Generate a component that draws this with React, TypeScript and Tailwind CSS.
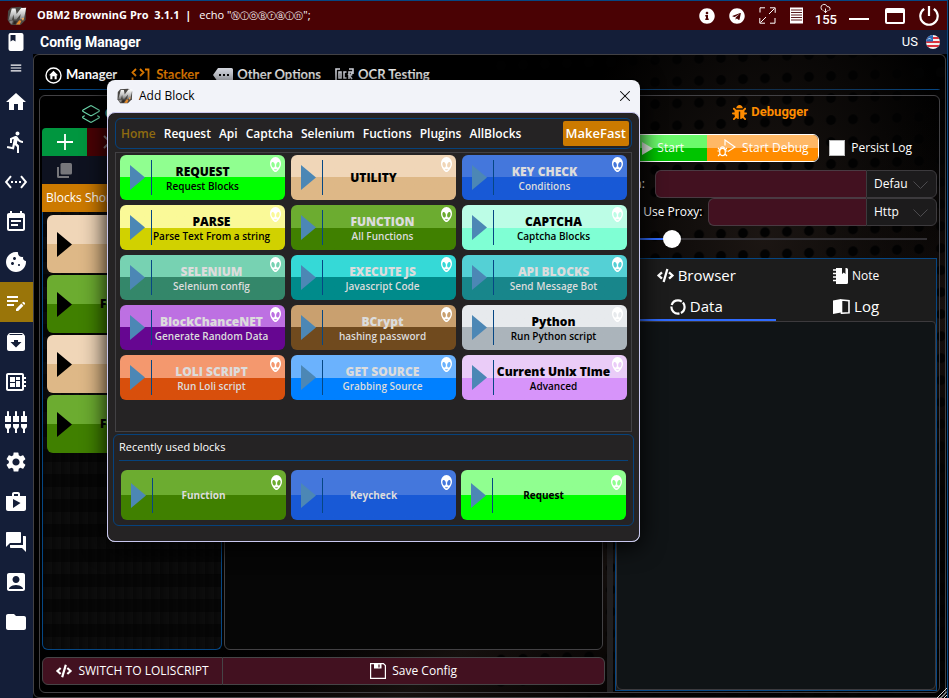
import { useState, type ReactNode } from "react"
import clsx from "clsx"
import {
  MdHome,
  MdMenu,
  MdDirectionsRun,
  MdSettingsEthernet,
  MdEventNote,
  MdCookie,
  MdEditNote,
  MdArchive,
  MdDeveloperBoard,
  MdSettingsInputComponent,
  MdSettings,
  MdShop,
  MdForum,
  MdAccountBox,
  MdFolder,
} from "react-icons/md"
import { FaInfoCircle, FaTelegram, FaBug, FaCode } from "react-icons/fa"
import { CloudDownload, Layers2, X } from "lucide-react"

type Block = {
  title: string
  sub?: string
  color: string
  light?: boolean
  narrow?: boolean
  left?: boolean
}

const BLOCKS: Block[] = [
  { title: "REQUEST", sub: "Request Blocks", color: "from-[#90ff90] to-[#00ff00]", narrow: true },
  { title: "UTILITY", color: "from-[#f0d6b8] to-[#deb887]", narrow: true },
  { title: "KEY CHECK", sub: "Conditions", color: "from-[#4477dc] to-[#1859d6]", light: true, narrow: true, left: true },
  { title: "PARSE", sub: "Parse Text From a string", color: "from-[#faf998] to-[#d1d100]" },
  { title: "FUNCTION", sub: "All Functions", color: "from-[#6cac30] to-[#408000]", light: true },
  { title: "CAPTCHA", sub: "Captcha Blocks", color: "from-[#bcfde6] to-[#7fffd4]" },
  { title: "SELENIUM", sub: "Selenium config", color: "from-[#77d2b2] to-[#34876a]", light: true },
  { title: "EXECUTE JS", sub: "Javascript Code", color: "from-[#35d9d7] to-[#008b8b]", light: true },
  { title: "API BLOCKS", sub: "Send Message Bot", color: "from-[#54d0d5] to-[#18868b]", light: true },
  { title: "BlockChanceNET", sub: "Generate Random Data", color: "from-[#bd70e2] to-[#660691]", light: true },
  { title: "BCrypt", sub: "hashing password", color: "from-[#c9a06f] to-[#704a1e]", light: true },
  { title: "Python", sub: "Run Python script", color: "from-[#e7eaed] to-[#abb4bb]" },
  { title: "LOLI SCRIPT", sub: "Run Loli script", color: "from-[#f4986e] to-[#d84f0c]", light: true, left: true },
  { title: "GET SOURCE", sub: "Grabbing Source", color: "from-[#6bb2fd] to-[#0080ff]", light: true },
  { title: "Current Unix Time", sub: "Advanced", color: "from-[#eaccf8] to-[#d794fa]" },
]

const RECENT: Block[] = [
  { title: "Function", color: "from-[#6cac30] to-[#408000]", light: true },
  { title: "Keycheck", color: "from-[#4477dc] to-[#1859d6]", light: true },
  { title: "Request", color: "from-[#90ff90] to-[#00ff00]" },
]

const STACK = [
  { title: "UTILITY", color: "from-[#f0d6b8] to-[#deb887]" },
  { title: "FUNCTION", color: "from-[#6cac30] to-[#408000]" },
  { title: "UTILITY", color: "from-[#f0d6b8] to-[#deb887]" },
  { title: "FUNCTION", color: "from-[#6cac30] to-[#408000]" },
]

const CATEGORIES = ["Home", "Request", "Api", "Captcha", "Selenium", "Fuctions", "Plugins", "AllBlocks"]

const NAV = [
  { label: "Home", icon: MdHome },
  { label: "Runner", icon: MdDirectionsRun },
  { label: "Proxies", icon: MdSettingsEthernet },
  { label: "Wordlists", icon: MdEventNote },
  { label: "Cookies", icon: MdCookie },
  { label: "Configs", icon: MdEditNote },
  { label: "Hits", icon: MdArchive },
  { label: "Tools", icon: MdDeveloperBoard },
  { label: "Plugins", icon: MdSettingsInputComponent },
  { label: "Settings", icon: MdSettings },
  { label: "Shop", icon: MdShop },
  { label: "Chat", icon: MdForum },
  { label: "Account", icon: MdAccountBox },
  { label: "Files", icon: MdFolder },
]

function Logo({ className }: { className?: string }) {
  return (
    <svg viewBox="0 0 20 20" className={className} aria-hidden="true">
      <defs>
        <linearGradient id="steel" x1="0" y1="0" x2="0" y2="1">
          <stop offset="0" stopColor="#ffffff" />
          <stop offset="0.6" stopColor="#b9b9b9" />
          <stop offset="1" stopColor="#6e6e6e" />
        </linearGradient>
      </defs>
      <path d="M4 1.5 14 .8 19 4.5 18.6 14 13.6 19H4L.6 14 1 5Z" fill="#4a4744" />
      <path d="M1.5 14.5 4.8 2.6 8.6 2.4 9.6 8 14.2 2 19.2 1.8 16.8 13.4 12.6 13.6 13.8 8 9.4 13.4 7.2 13.4 6.4 8.4 4.8 14.4Z" fill="url(#steel)" />
      <path d="M2.5 15 6 14.6 5 18 2.8 17Z" fill="#8c8a88" />
      <path d="M9 18.4 12.2 14.2 14.4 14.8 12.8 18.6Z" fill="#e58a2c" />
      <path d="M14.4 12.2 17.2 11.8 16 15Z" fill="#f2a95a" />
      <path d="M7 15.2h3l-1.6 3H6.2Z" fill="#2a2522" />
    </svg>
  )
}

function Alien({ className }: { className?: string }) {
  return (
    <svg viewBox="3 3 18 18" preserveAspectRatio="none" className={className} fill="currentColor" aria-hidden="true">
      <path d="M12 3C16.97 3 21 6.58 21 11C21 15.42 15 21 12 21C9 21 3 15.42 3 11C3 6.58 7.03 3 12 3M10.31 10.93C9.29 9.29 7.47 8.58 6.25 9.34C5.03 10.1 4.87 12.05 5.89 13.69C6.92 15.33 8.74 16.04 9.96 15.28C11.18 14.5 11.33 12.57 10.31 10.93M13.69 10.93C12.67 12.57 12.82 14.5 14.04 15.28C15.26 16.04 17.08 15.33 18.11 13.69C19.13 12.05 18.97 10.1 17.75 9.34C16.53 8.58 14.71 9.29 13.69 10.93M12 17.75C10 17.75 9.5 17 9.5 17C9.5 17.03 10 19 12 19C14 19 14.5 17.03 14.5 17C14.5 17 14 17.75 12 17.75Z" />
    </svg>
  )
}

function Arrow({ className }: { className?: string }) {
  return (
    <svg viewBox="0 0 15 25" className={clsx("h-[25px] w-[15px] shrink-0", className)} fill="currentColor" aria-hidden="true">
      <path d="M0 0 15 12.5 0 25Z" />
    </svg>
  )
}

function BlockButton({ block, recent }: { block: Block; recent?: boolean }) {
  return (
    <button
      className={clsx(
        "relative flex min-w-0 items-center rounded-md bg-linear-to-b from-50% to-50% pl-2.5",
        recent ? "h-[50px]" : "h-[45px]",
        block.color,
        block.light ? "text-[#dcdcdc]" : "text-black"
      )}
    >
      <Arrow className="text-[#4c87b5]" />
      <span className="ml-1.5 h-[35px] w-px shrink-0 bg-[#064784]" />
      <span
        className={clsx(
          "flex min-w-0 flex-1 flex-col items-center whitespace-nowrap",
          recent || block.narrow ? "pr-8" : "pr-3.5"
        )}
      >
        <span className={clsx("flex flex-col", !block.left && "items-center")}>
          <span className={recent ? "text-[10px] leading-4 font-bold" : "text-[12px] leading-4 font-extrabold"}>
            {block.title}
          </span>
          {block.sub && <span className="text-[10px] leading-3 font-semibold">{block.sub}</span>}
        </span>
      </span>
      <Alien className={clsx("absolute right-1 h-[15px] w-[11px] text-white", recent ? "top-[5px]" : "top-0.5")} />
    </button>
  )
}

function AddBlockDialog() {
  const [category, setCategory] = useState("Home")

  return (
    <div
      role="dialog"
      aria-label="Add Block"
      className="absolute top-20 left-[107px] flex h-[462px] w-[533px] flex-col rounded-lg bg-[#f2f3f9] shadow-[0_4px_24px_#000]"
    >
      <div className="flex h-8 shrink-0 items-center pr-1.5 pl-2.5 text-black">
        <Logo className="size-4" />
        <span className="ml-1.5 flex-1 text-[12px]">Add Block</span>
        <button aria-label="Close">
          <X size={18} strokeWidth={1.4} />
        </button>
      </div>
      <div className="flex flex-1 flex-col rounded-lg border border-[#c9c8f0] bg-[#252324] pt-[5px]">
        <div className="mx-[7px] flex h-[31px] items-center rounded-md border border-[#06427c] pr-0.5 pl-[5px]">
          <nav className="flex flex-1 gap-2 text-[12px] font-semibold">
            {CATEGORIES.map((name) => (
              <button
                key={name}
                onClick={() => setCategory(name)}
                className={category === name ? "text-[#8f6b10]" : "text-white"}
              >
                {name}
              </button>
            ))}
          </nav>
          <button className="h-[25px] rounded-xs bg-[#cc7a00] px-[3px] text-[13px] font-semibold text-white">
            MakeFast
          </button>
        </div>
        <div className="mx-[7px] mt-[3px] h-[280px] border border-[#424144] px-1 pt-0.5">
          <div className="grid grid-cols-3 gap-x-1.5 gap-y-[5px]">
            {BLOCKS.map((block) => (
              <BlockButton key={block.title} block={block} />
            ))}
          </div>
        </div>
        <section className="mx-[5px] mt-0.5 h-[92px] rounded-md border border-[#06427c] px-[5px]">
          <h2 className="flex h-[26px] items-center border-b border-[#06427c] text-[11px] text-white">
            Recently used blocks
          </h2>
          <div className="mt-[9px] grid grid-cols-3 gap-[5px] px-0.5">
            {RECENT.map((block) => (
              <BlockButton key={block.title} block={block} recent />
            ))}
          </div>
        </section>
      </div>
    </div>
  )
}

function TopBar() {
  return (
    <header className="flex h-[29px] items-center bg-[#4a0204] pr-2 pl-[7px] text-white">
      <Logo className="size-5" />
      <span className="ml-2.5 text-[11px] font-bold whitespace-pre">OBM2 BrowninG Pro  3.1.1  |</span>
      <span className="ml-2 flex items-center font-['Open_Sans','DejaVu_Sans',sans-serif] text-[11px] font-medium whitespace-pre">
        echo "<span className="text-[9px]">ⓃⓘⓞⒷⓡⓐⓘⓝ</span>";
      </span>
      <div className="ml-auto flex items-center">
        <button aria-label="Info" className="mr-3.5">
          <FaInfoCircle size={16} />
        </button>
        <button aria-label="Telegram" className="mr-3.5">
          <FaTelegram size={16} />
        </button>
        <button aria-label="Full screen" className="mr-3.5">
          <svg viewBox="0 0 17 17" className="size-[17px]" fill="none" stroke="currentColor">
            <path d="M1 5.5V.8h5M11 .8h5.2v5M16 11v5.2h-5M6 16.2H.8V11M10 7l5.5-5.5M7 10l-5.5 5.5" />
          </svg>
        </button>
        <button aria-label="Log" className="mr-3">
          <svg viewBox="0 0 13 17" className="h-[17px] w-[13px]">
            <path d="M0 .5h13v16H0Z" fill="#fff" />
            <path d="M1 3h11M1 5.5h11M1 8h11M1 10.5h11M1 13h11" stroke="#4a0204" strokeWidth="0.9" />
          </svg>
        </button>
        <div className="mr-3 flex flex-col items-center pb-0.5 text-[13px]">
          <CloudDownload size={11} strokeWidth={2} />
          <span className="font-[Roboto,sans-serif] leading-3 font-medium">155</span>
        </div>
        <button aria-label="Minimise" className="mr-4 h-4 w-5 pt-1.5">
          <span className="block h-0.5 bg-white" />
        </button>
        <button aria-label="Maximise" className="mr-3.5 h-4 w-5 rounded-xs border-2 border-t-[5px] border-white" />
        <button aria-label="Exit">
          <svg viewBox="0 0 20 20" className="size-5" fill="none" stroke="currentColor" strokeWidth="2.2">
            <path d="M10 0v10M5.2 2.8A8.7 8.7 0 1 0 14.8 2.8" />
          </svg>
        </button>
      </div>
    </header>
  )
}

function UsFlag() {
  return (
    <svg viewBox="0 0 14 14" className="size-3.5" aria-hidden="true">
      <clipPath id="round">
        <circle cx="7" cy="7" r="7" />
      </clipPath>
      <g clipPath="url(#round)">
        <path d="M0 0h14v14H0Z" fill="#f5f0f0" />
        <path d="M0 3h14M0 7h14M0 11h14" stroke="#d9303c" strokeWidth="2" />
        <path d="M0 0h7v6.5H0Z" fill="#2c6cb8" />
        <path d="M2 4.5 3.5 3 5 4.5" stroke="#fff" fill="none" strokeWidth="0.8" />
      </g>
    </svg>
  )
}

function Sidebar() {
  return (
    <aside className="flex w-[33px] shrink-0 flex-col bg-[#141e38] text-white">
      <button aria-label="Config Manager" className="flex h-6 items-center justify-center pr-px">
        <svg viewBox="0 0 16 18" className="h-[18px] w-4">
          <path d="M2.5 0h11A2 2 0 0 1 15.5 2v14a2 2 0 0 1-2 2h-11a2 2 0 0 1-2-2V2a2 2 0 0 1 2-2Z" fill="#fff" />
          <path d="M2.5 2h5v6.5L5 7 2.5 8.5Z" fill="#141e38" />
        </svg>
      </button>
      <button aria-label="Menu" className="flex h-7 items-center justify-center pr-px">
        <MdMenu size={14} />
      </button>
      {NAV.map(({ label, icon: Icon }) => (
        <button
          key={label}
          aria-label={label}
          className={clsx("flex h-10 items-center justify-center pr-px", label === "Configs" && "bg-[#9a7509]")}
        >
          <Icon size={24} />
        </button>
      ))}
    </aside>
  )
}

function Tabs() {
  return (
    <nav className="flex h-[35px] items-center gap-3.5 border-b border-[#064784] px-1.5 pt-1.5 font-[Lato,sans-serif] text-[13px] font-bold text-white">
      <a href="#manager" className="flex items-center gap-1">
        <svg viewBox="0 0 17 17" className="size-[17px]">
          <circle cx="8.5" cy="8.5" r="7.5" fill="none" stroke="#fff" strokeWidth="1.4" />
          <path d="M8.5 3.8 13 8.2h-1.3v4H9.6V9.3H7.4v2.9H5.3v-4H4Z" fill="#fff" />
        </svg>
        Manager
      </a>
      <a href="#stacker" className="flex items-center gap-1.5 text-[#ff8c00]">
        <svg viewBox="0 0 19 14" className="h-3.5 w-[19px]" fill="none" stroke="currentColor" strokeWidth="1.8">
          <path d="M5 1 1.5 4.5 5 8M9 1l3.5 3.5L9 8M1.5 9.5V13H4M14 1.5h3.5V13H13" />
        </svg>
        Stacker
      </a>
      <a href="#options" className="flex items-center gap-1">
        <svg viewBox="0 0 20 14" className="h-3.5 w-5">
          <path d="M5 0h13.5A1.5 1.5 0 0 1 20 1.5v11a1.5 1.5 0 0 1-1.5 1.5H5L0 7Z" fill="#e6e9f2" />
          <path d="M6 6h2v2H6ZM10 6h2v2h-2ZM14 6h2v2h-2Z" fill="#0a0a0a" />
        </svg>
        Other Options
      </a>
      <a href="#ocr" className="flex items-center gap-1">
        <svg viewBox="0 0 19 14" className="h-3.5 w-[19px]" fill="none" stroke="#e6e9f2" strokeWidth="1.6">
          <path d="M5 1H1v12h4M14 1h4v5M4 4v6h2V4ZM11.5 4H9v6h2.5M14 11V4h2.5v3H14l3 4" />
        </svg>
        OCR Testing
      </a>
    </nav>
  )
}

function StackColumn() {
  return (
    <div className="flex min-w-0 flex-[564] flex-col pb-[7px]">
      <div className="flex flex-1 gap-0.5">
        <div className="flex w-[180px] shrink-0 flex-col">
          <h2 className="flex h-8 items-center gap-1 pt-1 pl-[39px] font-[Lato,sans-serif] text-[13px] font-bold text-[#6fdcb0]">
            <Layers2 size={20} strokeWidth={1.4} />
            Current
          </h2>
          <div className="grid grid-cols-4">
            <button aria-label="Add" className="flex h-7 items-center justify-center rounded-tl-sm bg-[#00963f] text-white">
              <svg viewBox="0 0 16 16" className="size-4" stroke="currentColor" strokeWidth="1.8">
                <path d="M8 0v16M0 8h16" />
              </svg>
            </button>
            <button aria-label="Remove" className="flex h-7 items-center justify-center bg-[#4a0204] text-[#8d8485]">
              <X size={22} />
            </button>
            <span className="h-7 bg-[#0e1220]" />
            <span className="h-7 bg-[#0e1220]" />
            <button aria-label="Duplicate" className="flex h-7 items-center justify-center bg-[#0e1220] text-[#77777b]">
              <svg viewBox="0 0 15 15" className="size-[15px]" fill="currentColor">
                <path d="M5 0h8.5A1.5 1.5 0 0 1 15 1.5V10a1.5 1.5 0 0 1-1.5 1.5H5A1.5 1.5 0 0 1 3.5 10V1.5A1.5 1.5 0 0 1 5 0Z" />
                <path d="M0 4h2v9h10v2H1.5A1.5 1.5 0 0 1 0 13.5Z" />
              </svg>
            </button>
            <span className="col-span-3 bg-[#0e1220]" />
          </div>
          <div className="flex h-7 items-center bg-[#cc7a00] pl-1 text-[12px] text-white">Blocks Shortcut</div>
          <ul className="flex flex-1 flex-col gap-0.5 rounded-b-md border border-t-0 border-[#064784] bg-[#070707] bg-[linear-gradient(90deg,#00000060,transparent_50%,#00000060_50%,transparent),linear-gradient(#0d0d0d_50%,transparent_50%)] bg-size-[18px_25px] px-1 pt-[3px]">
            {STACK.map((item, i) => (
              <li key={i}>
                <button
                  className={clsx(
                    "flex h-[58px] w-full items-center rounded-md bg-linear-to-b from-50% to-50% pl-2.5 text-[12px] font-extrabold text-black",
                    item.color
                  )}
                >
                  <Arrow />
                  <span className="flex-1 pr-[25px] text-center">{item.title}</span>
                </button>
              </li>
            ))}
          </ul>
        </div>
        <div className="mr-0.5 flex-1 rounded-md border border-[#424144] bg-[#060606]" />
      </div>
      <div className="mt-[7px] flex h-7 text-[12px] text-white">
        <button className="flex w-[181px] items-center justify-center gap-1.5 rounded-l-md border border-[#464446] bg-[#421120]">
          <FaCode size={16} />
          SWITCH TO LOLISCRIPT
        </button>
        <button className="flex flex-1 items-center justify-center gap-1.5 rounded-r-md border border-l-0 border-[#464446] bg-[#421120]">
          <svg viewBox="0 0 16 16" className="size-4" fill="none" stroke="currentColor" strokeWidth="1.2">
            <path d="M.6.6h12.8l2 2v12.8H.6Z" />
            <path d="M4 1h7.5v4.5H4Z" fill="currentColor" stroke="none" />
            <path d="M9 1.5v3" stroke="#421120" />
          </svg>
          Save Config
        </button>
      </div>
    </div>
  )
}

function Combo({ id, label, value }: { id: string; label: string; value: string }) {
  return (
    <div className="relative w-[71px] shrink-0 rounded-r-md border border-[#3c3a3d] bg-[#1c1b1c]">
      <select id={id} aria-label={label} className="h-full w-full appearance-none pl-[7px] text-[12px] text-white outline-none">
        <option>{value}</option>
      </select>
      <svg
        viewBox="0 0 15 8"
        className="pointer-events-none absolute top-2.5 right-2 h-2 w-[15px]"
        fill="none"
        stroke="#4c4b4e"
      >
        <path d="M.5.5 7.5 7.5 14.5.5" />
      </svg>
    </div>
  )
}

function DebugTab({ icon, label, small, active }: { icon: ReactNode; label: string; small?: boolean; active?: boolean }) {
  return (
    <button
      className={clsx(
        "flex h-[31px] items-center justify-center gap-1 border-b-2 pt-1 text-white",
        small ? "text-[12px]" : "text-[15px]",
        active ? "border-[#2f6bff]" : "border-transparent"
      )}
    >
      {icon}
      {label}
    </button>
  )
}

function Debugger() {
  const [persist, setPersist] = useState(false)
  const [speed, setSpeed] = useState(15)

  return (
    <div className="flex min-w-0 flex-[322] flex-col pb-px">
      <h2 className="flex h-8 items-center justify-center gap-1 pr-3 font-[Roboto,sans-serif] text-[13px] font-bold text-[#ff8c00]">
        <FaBug size={15} />
        Debugger
      </h2>
      <div className="mt-1.5 flex items-center text-[12px] text-white">
        <div className="flex h-7 w-[204px] shrink-0 overflow-hidden rounded-md border border-white">
          <button className="flex w-[91px] items-center gap-1 bg-linear-to-b from-[#6bfa6b] from-50% to-[#00c400] to-50% pl-[26px]">
            <svg viewBox="0 0 11 13" className="h-[13px] w-[11px]" fill="#e8f5e8">
              <path d="M0 0 11 6.5 0 13Z" />
            </svg>
            Start
          </button>
          <button className="flex flex-1 items-center justify-center gap-1.5 bg-linear-to-b from-[#ffb866] from-50% to-[#ff8c00] to-50%">
            <svg viewBox="0 0 19 18" className="h-[18px] w-[19px]" fill="none" stroke="currentColor" strokeWidth="1.2">
              <path d="M8 6.5V1l10 7-7 4.5" />
              <ellipse cx="5.5" cy="13" rx="2.8" ry="3.6" />
              <path d="M3.5 9.8a2 2 0 0 1 4 0M2.7 12H.5M8.3 12h2.2M3 15 1 17M8 15l2 2M3 11 1 9M8 11l1.8-2" />
            </svg>
            Start Debug
          </button>
        </div>
        <label className="ml-2.5 flex items-center gap-1.5">
          <input
            type="checkbox"
            checked={persist}
            onChange={(e) => setPersist(e.target.checked)}
            className="size-4 appearance-none border border-[#bbb] bg-white checked:bg-[#2f6bff]"
          />
          Persist Log
        </label>
      </div>
      <div className="mt-2 flex h-7 text-[12px] text-white">
        <label htmlFor="data" className="flex w-10 shrink-0 items-center">
          Data:
        </label>
        <input id="data" className="min-w-0 flex-1 rounded-l-md border border-r-0 border-[#4a3a42] bg-[#421120] px-2 outline-none" />
        <Combo id="data-type" label="Data type" value="Defau" />
      </div>
      <div className="flex h-7 text-[12px] text-white">
        <label htmlFor="proxy" className="flex w-[93px] shrink-0 items-center justify-end pr-1.5">
          Use Proxy:
        </label>
        <input id="proxy" className="min-w-0 flex-1 rounded-l-md border border-r-0 border-[#4a3a42] bg-[#421120] px-2 outline-none" />
        <Combo id="proxy-type" label="Proxy type" value="Http" />
      </div>
      <div className="mr-2.5 ml-1 flex h-[26px] items-center">
        <input
          type="range"
          aria-label="Speed"
          value={speed}
          onChange={(e) => setSpeed(Number(e.target.value))}
          className="h-0.5 w-full appearance-none bg-[linear-gradient(90deg,#2f6bff_16%,#333135_16%)] [&::-webkit-slider-thumb]:size-[18px] [&::-webkit-slider-thumb]:appearance-none [&::-webkit-slider-thumb]:rounded-full [&::-webkit-slider-thumb]:bg-white"
        />
      </div>
      <div className="mt-1.5 flex flex-1 flex-col border border-[#064784] bg-[#1c1c1c]">
        <div className="grid grid-cols-2">
          <DebugTab icon={<FaCode size={17} />} label="Browser" />
          <DebugTab
            small
            label="Note"
            icon={
              <svg viewBox="0 0 15 16" className="h-4 w-[15px]" fill="currentColor">
                <path d="M3 0h6v6l1.8-1.5L12.5 6V0h1A1.5 1.5 0 0 1 15 1.5v13a1.5 1.5 0 0 1-1.5 1.5H3Z" />
                <path d="M0 2h4M0 5.5h4M0 9h4M0 12.5h4" stroke="currentColor" strokeWidth="1.5" />
              </svg>
            }
          />
          <DebugTab
            active
            label="Data"
            icon={
              <svg viewBox="0 0 16 16" className="size-4" fill="none" stroke="currentColor" strokeWidth="2.2">
                <circle cx="8" cy="8" r="6.6" strokeDasharray="12.3 1.5" strokeDashoffset="5" />
              </svg>
            }
          />
          <DebugTab
            label="Log"
            icon={
              <svg viewBox="0 0 17 15" className="h-[15px] w-[17px]">
                <path d="M0 1.5 8 0v13.5L0 15Z" fill="#fff" />
                <path d="M8.5 1 16 1.8v12l-7.5.4Z" fill="none" stroke="#fff" strokeWidth="1.6" />
              </svg>
            }
          />
        </div>
        <div className="flex-1 rounded-t-sm rounded-b-md border border-[#3c3a3d] bg-[#101416]" />
      </div>
    </div>
  )
}

export default function App() {
  return (
    <div className="relative min-h-screen bg-[#0b0c14] pr-px font-['Open_Sans',sans-serif]">
      <div className="flex min-h-screen flex-col border-t border-r border-[#064784] bg-black">
        <TopBar />
        <div className="flex flex-1">
          <Sidebar />
          <div className="flex min-w-0 flex-1 flex-col">
            <div className="flex h-6 items-center bg-[#141e38] pr-[7px] pl-[7px] font-[Roboto,sans-serif] text-white">
              <h1 className="flex-1 text-[14px] font-bold">Config Manager</h1>
              <span className="mr-2 text-[13px]">US</span>
              <UsFlag />
            </div>
            <main className="relative mr-px flex flex-1 flex-col rounded-md border border-[#424144] bg-linear-to-br from-black from-50% via-[#15100e] via-70% to-black px-[5px] pb-1">
              <svg className="pointer-events-none absolute inset-y-0 right-0 h-full w-1/2" aria-hidden="true">
                <pattern id="mesh" width="22" height="22" patternUnits="userSpaceOnUse" patternTransform="skewY(-2)">
                  <circle cx="11" cy="11" r="5" fill="#020202" />
                </pattern>
                <radialGradient id="glow" cx="0.6" cy="0.28" r="0.45">
                  <stop offset="0" stopColor="#1c1613" />
                  <stop offset="1" stopColor="#1c1613" stopOpacity="0" />
                </radialGradient>
                <rect width="100%" height="100%" fill="url(#glow)" />
                <rect width="100%" height="100%" fill="url(#mesh)" />
              </svg>
              <Tabs />
              <div className="relative mt-[5px] flex flex-1 gap-0.5 rounded-md border border-[#424144] px-0.5">
                <StackColumn />
                <div className="w-1.5 shrink-0 bg-[#201f20]" />
                <Debugger />
              </div>
            </main>
          </div>
        </div>
      </div>
      <svg viewBox="0 0 10 10" className="absolute right-0.5 bottom-0 size-2.5" stroke="#d8d8d8" aria-hidden="true">
        <path d="M0 10 10 0M3.5 10 10 3.5M7 10l3-3" />
      </svg>
      <AddBlockDialog />
    </div>
  )
}
